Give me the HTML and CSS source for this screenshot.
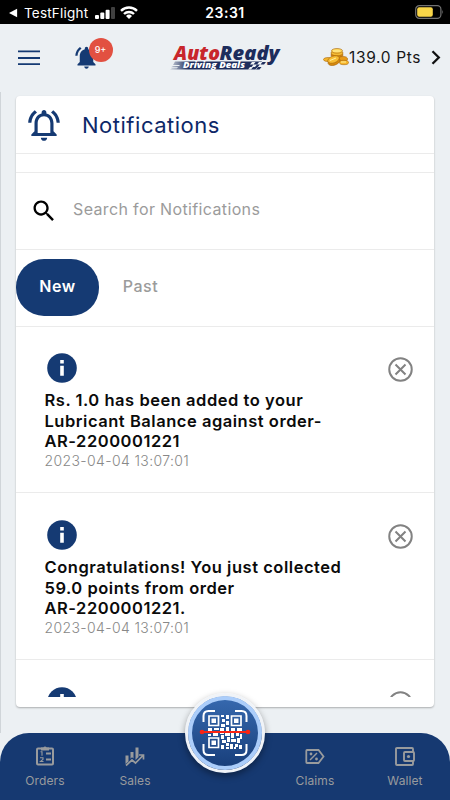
FILE: index.html
```html
<!DOCTYPE html>
<html lang="en">
<head>
<meta charset="utf-8">
<title>Notifications</title>
<link rel="stylesheet" href="styles.css">
</head>
<body>
<svg class="defs" width="0" height="0" aria-hidden="true">
  <symbol id="info" viewBox="0 0 30 30"><circle cx="15" cy="15" r="14.8" fill="#153a73"/><path d="M13.2 7h3.6v3.5h-3.6zM13.2 12.8h3.6v10h-3.6z" fill="#fff"/></symbol>
  <symbol id="close" viewBox="0 0 24 24"><g fill="none" stroke="#828282" stroke-width="1.9"><circle cx="12" cy="12" r="10.8"/><path d="M7.2 7.2l9.6 9.6M16.8 7.2l-9.6 9.6"/></g></symbol>
</svg>
<div class="app">
  <div class="status">
    <svg class="back" viewBox="0 0 10 10"><path d="M0 5L9 .3v9.4z"/></svg>
    <span class="carrier">TestFlight</span>
    <svg class="signal" viewBox="0 0 20 12"><rect y="8" width="4" height="4" rx="1"/><rect x="5.3" y="5.5" width="4" height="6.5" rx="1"/><rect x="10.6" y="2.8" width="4" height="9.2" rx="1"/><rect x="16" width="4" height="12" rx="1" fill="#404040"/></svg>
    <svg class="wifi" viewBox="0 0 18 13"><g fill="none" stroke="#fff" stroke-width="2.4"><path d="M1 4.8a11.4 11.4 0 0 1 16 0M4 8a7.2 7.2 0 0 1 10 0"/></g><path d="M6 10a4.3 4.3 0 0 1 6 0l-3 3z"/></svg>
    <span class="clock">23:31</span>
    <svg class="battery" viewBox="0 0 29 14"><rect x=".7" y=".7" width="25.2" height="12.6" rx="3.6" fill="none" stroke="#727272" stroke-width="1.2"/><rect x="2.2" y="2.2" width="15.6" height="9.6" rx="2" fill="#f8d548"/><path d="M27.3 4.7q1.7 2.3 0 4.6z" fill="#727272"/></svg>
  </div>
  <header class="top">
    <svg class="menu" viewBox="0 0 22 16"><path d="M0 1.3h22M0 8h22M0 14.2h22" stroke="#153a73" stroke-width="1.8"/></svg>
    <div class="alerts">
      <svg viewBox="0 0 24 24"><path fill="#153a73" d="M7.58 4.08L6.15 2.65C3.75 4.48 2.17 7.3 2.03 10.5h2c.15-2.65 1.51-4.97 3.55-6.42zM18 11c0-3.07-1.64-5.64-4.5-6.32V4c0-.83-.67-1.5-1.5-1.5s-1.5.67-1.5 1.5v.68C7.63 5.36 6 7.92 6 11v5l-2 2v1h16v-1l-2-2v-5zm-6 11c1.1 0 2-.9 2-2h-4c0 1.100.9 2 2 2z"/></svg>
      <span class="badge">9+</span>
    </div>
    <svg class="logo" viewBox="0 0 112 28">
      <defs><linearGradient id="strip" x2="1"><stop stop-color="#1d2d5c" stop-opacity=".15"/><stop offset=".2" stop-color="#1d2d5c"/></linearGradient></defs>
      <g class="brand"><text x="4" y="15.500" fill="#c8262b" textLength="46" lengthAdjust="spacingAndGlyphs">Auto</text><text x="49.500" y="15.500" fill="#1d2d5c" textLength="60" lengthAdjust="spacingAndGlyphs">Ready</text></g>
      <path d="M5 17.500h87l-6 8H0l2-1.300h5l1-1H1l2-1.300h6l1-1H3z" fill="url(#strip)"/>
      <text x="13" y="24.200" class="tagline" textLength="62" lengthAdjust="spacingAndGlyphs">Driving Deals</text>
      <path d="M82 18h3.500l-2 2.500H80zM89 18h3.500l-2 2.500H87zM83.500 20.500H87L85 23h-3.500zM80 23h3l-2 2.500h-3zM88 23h3l-2 2.500h-4z" fill="#ecf0f3"/>
      <path d="M90.500 20.500H94l2-2.500h-3.500zM86 25.500h3.500l2-2.500H88z" fill="#1d2d5c"/>
    </svg>
    <div class="points">
      <svg class="coins" viewBox="0 0 26 18"><g stroke="#a86508" stroke-width=".6"><ellipse cx="5" cy="11.500" rx="4.500" ry="2" fill="#f5b52b"/><ellipse cx="14" cy="7" rx="6" ry="3" fill="#d88a12"/><ellipse cx="14" cy="5" rx="6" ry="2.800" fill="#f4bb34"/><ellipse cx="14" cy="2.800" rx="5.500" ry="2.300" fill="#ffd75a"/><ellipse cx="20" cy="11" rx="4.500" ry="2.500" fill="#e79a18"/><ellipse cx="21" cy="14.500" rx="4.500" ry="2.200" fill="#f7b628"/><ellipse cx="11" cy="13.500" rx="6.200" ry="3.600" fill="#d98b0c" transform="rotate(-20 11 13.500)"/><ellipse cx="10.500" cy="11.500" rx="6" ry="3.400" fill="#f7be35" transform="rotate(-20 10.500 11.500)"/></g><path d="M7 12.500l6-2.500M10 3h7M18 14h5" stroke="#fff0a0"/></svg>
      <span>139.0 Pts</span>
      <svg class="chev" viewBox="0 0 10 15"><path d="M1.500 1.200l6.300 6.300-6.300 6.300" fill="none" stroke="#111" stroke-width="2.300"/></svg>
    </div>
  </header>
  <main class="page">
    <section class="card">
      <div class="title">
        <svg viewBox="0 0 24 24"><path fill="#153a73" d="M12 22c1.100 0 2-.9 2-2h-4c0 1.100.9 2 2 2zm6-6v-5c0-3.070-1.630-5.640-4.500-6.320V4c0-.83-.67-1.500-1.500-1.500s-1.500.67-1.500 1.500v.68C7.640 5.360 6 7.920 6 11v5l-2 2v1h16v-1l-2-2zm-2 1H8v-6c0-2.480 1.510-4.500 4-4.500s4 2.020 4 4.500v6zM7.580 4.080L6.150 2.650C3.750 4.480 2.170 7.300 2.030 10.500h2c.15-2.650 1.510-4.970 3.550-6.420zm12.390 6.420h2c-.15-3.200-1.730-6.020-4.120-7.850l-1.420 1.430c2.020 1.450 3.390 3.770 3.540 6.420z"/></svg>
        <h1>Notifications</h1>
      </div>
      <div class="spacer"></div>
      <div class="search">
        <svg viewBox="0 0 24 24"><path d="M15.500 14h-.79l-.28-.27C15.410 12.590 16 11.110 16 9.500 16 5.910 13.090 3 9.500 3S3 5.910 3 9.500 5.910 16 9.500 16c1.610 0 3.090-.59 4.230-1.570l.27.28v.79l5 4.990L20.490 19l-4.990-5zm-6 0C7.010 14 5 11.990 5 9.500S7.010 5 9.500 5 14 7.010 14 9.500 11.990 14 9.500 14z"/></svg>
        <span>Search for Notifications</span>
      </div>
      <div class="tabs"><span class="tab active">New</span><span class="tab">Past</span></div>
      <div class="list">
        <article class="note">
          <div class="icons"><svg class="info"><use href="#info"/></svg><svg class="close"><use href="#close"/></svg></div>
          <p>Rs. 1.0 has been added to your<br>Lubricant Balance against order-<br>AR-2200001221</p>
          <time>2023-04-04 13:07:01</time>
        </article>
        <article class="note">
          <div class="icons"><svg class="info"><use href="#info"/></svg><svg class="close"><use href="#close"/></svg></div>
          <p>Congratulations! You just collected<br>59.0 points from order<br>AR-2200001221.</p>
          <time>2023-04-04 13:07:01</time>
        </article>
        <article class="note">
          <div class="icons"><svg class="info"><use href="#info"/></svg><svg class="close"><use href="#close"/></svg></div>
        </article>
      </div>
    </section>
  </main>
  <nav class="nav">
    <a><svg viewBox="0 0 20 22"><g fill="none" stroke="#999b9d"><rect x="2" y="3.500" width="16" height="16" rx="1" stroke-width="2"/><path d="M11 8.500h5M11 14.500h5" stroke-width="2"/><path d="M5.500 6.800h1.500v4M5 12.800h3v1.500l-2.500 2.200H8.500" stroke-width="1.100"/></g><path d="M6 2.500h2.300a2 2 0 0 1 3.400 0H14v3H6z" fill="#999b9d"/></svg>Orders</a>
    <a><svg viewBox="0 0 20 22"><path d="M.5 10.500H3.500v6L.5 19zM5.500 7h3v6.500L7 12.300l-1.500 1.500zM10.500 2.500h3v9.500l-3 3z" fill="#999b9d"/><path d="M1 20.500l6-5.500 3.500 3 7.500-7.500M14 10h4.500v4.500" fill="none" stroke="#999b9d" stroke-width="1.700"/></svg>Sales</a>
    <a class="scan" aria-label="Scan"></a>
    <a><svg viewBox="0 0 20 22"><path d="M2 5h11.500l5 6.500-5 6.500H2q-.7 0-.7-.7V5.700Q1.300 5 2 5z" fill="none" stroke="#999b9d" stroke-width="1.800"/><path d="M5 15l7-7" stroke="#999b9d" stroke-width="1.500"/><circle cx="6" cy="9" r="1.400" fill="#999b9d"/><circle cx="11.500" cy="14" r="1.400" fill="#999b9d"/></svg>Claims</a>
    <a><svg viewBox="0 0 20 22"><g fill="none" stroke="#999b9d" stroke-width="1.900"><path d="M18 7V4q0-1-1-1H2Q1 3 1 4v15q0 1 1 1h15q1 0 1-1v-3"/><rect x="9" y="7" width="10" height="9" rx="1"/></g><circle cx="13.500" cy="11.500" r="1.600" fill="#999b9d"/></svg>Wallet</a>
    <div class="fab">
      <svg viewBox="0 0 50 46">
        <g fill="none" stroke="#fff" stroke-width="2"><path d="M3.500 12V6q0-5 5-5H15M35 1h6.500q5 0 5 5v6M46.500 34v6q0 5-5 5H35M15 45H8.500q-5 0-5-5v-6"/><path d="M9 6h9.500v9.500H9zM31.500 6H41v9.500h-9.500zM9 28h9.500v9.500H9z" stroke-width="1.700"/></g>
        <path fill="#fff" d="M11.500 8.500h4.500v4.500h-4.500zM34 8.500h4.500v4.500H34zM11.500 30.500h4.500v4.500h-4.500zM21 5h3v2h-3zM26 5h3v4h-3zM22 9h3v3h-3zM26 11h3v4h-3zM21 14h4v3h-4zM8 18h4v4H8zM14 18h5v2h-5zM13 22h5v4h-5zM20 18h4v6h-4zM26 17h3v4h-3zM31 18h4v3h-4zM37 18h5v4h-5zM8 24h3v2H8zM21 25h3v4h-3zM25 23h5v3h-5zM31 23h3v5h-3zM36 23h3v3h-3zM40 24h2v5h-2zM22 30h4v3h-4zM27 27h3v5h-3zM31 29h5v3h-5zM37 28h3v5h-3zM21 35h3v4h-3zM26 33h3v3h-3zM30 34h3v5h-3zM35 34h3v3h-3zM39 35h3v4h-3zM26 37h3v2h-3zM34 37h2v2h-2z"/>
        <path d="M1.500 22h47" stroke="#fa2413" stroke-width="2"/><circle cx="2" cy="22" r="2.300" fill="#fa2413"/><circle cx="48" cy="22" r="2.300" fill="#fa2413"/>
      </svg>
    </div>
  </nav>
</div>
</body>
</html>
```

FILE: styles.css
```css
* { box-sizing: border-box; }
body { margin: 0; font-family: Inter, "Liberation Sans", sans-serif; background: #ecf0f3; }
svg { display: block; flex: none; }
.defs { position: absolute; }
.app { width: 450px; height: 800px; display: flex; flex-direction: column; overflow: hidden; }
.status { height: 24px; flex: none; background: #000; color: #fff; display: flex; align-items: center; padding: 1px 7px 0 9px; position: relative; }
.status svg { fill: #fff; }
.back { width: 9px; height: 10px; }
.carrier { font-size: 13.5px; letter-spacing: .2px; margin-left: 6px; width: 66px; white-space: nowrap; }
.signal { width: 20px; height: 12px; margin-left: 5px; }
.wifi { width: 18px; height: 13px; margin-left: 5px; }
.clock { position: absolute; left: 0; right: 0; text-align: center; font-size: 14px; font-weight: 600; letter-spacing: .5px; }
.status .battery { width: 29px; height: 14px; margin-left: auto; margin-right: -1px; margin-top: -2px; }
.top { height: 68px; flex: none; display: flex; align-items: center; padding: 0 9px 0 18px; }
.menu { width: 22px; height: 16px; margin-top: -1px; }
.alerts { position: relative; width: 27px; height: 27px; margin: -1px 0 0 33px; }
.alerts > svg { width: 27px; height: 27px; }
.badge { position: absolute; left: 15.5px; top: -6px; width: 24px; height: 24px; border-radius: 50%; background: #e25041; color: #fff; font-size: 9px; font-weight: 500; line-height: 24px; text-align: center; }
.logo { width: 112px; height: 28px; margin: -1px 0 0 70px; overflow: visible; }
.brand { font: italic 800 20px "Open Sans", sans-serif; }
.tagline { font: italic 800 8px "Open Sans", sans-serif; fill: #fff; }
.points { display: flex; align-items: center; margin: -2px 0 0 auto; font-size: 15.5px; font-weight: 400; letter-spacing: .65px; color: #171717; white-space: nowrap; }
.points span { width: 72px; }
.coins { width: 26px; height: 18px; }
.chev { width: 10px; height: 15px; margin-left: 10px; }
.page { height: 641px; flex: none; border-left: 1px solid #d0d5d9; padding: 4px 16px 0 15px; }
.card { width: 418px; height: 611px; background: #fff; border-radius: 4px; box-shadow: 0 1px 2px rgba(0,0,0,.28); padding-bottom: 10px; display: flex; flex-direction: column; }
.title { height: 58px; flex: none; border-bottom: 1px solid #ebebeb; display: flex; align-items: center; padding-left: 9px; }
.title svg { width: 38px; height: 38px; margin-top: 0; }
h1 { margin: 0 0 0 19px; font-size: 22px; font-weight: 400; letter-spacing: .52px; color: #0d2868; }
.spacer { height: 19px; flex: none; border-bottom: 1px solid #ebebeb; }
.search { height: 77px; flex: none; border-bottom: 1px solid #ebebeb; display: flex; align-items: center; padding-left: 14px; font-size: 16px; letter-spacing: .36px; color: #9b9b9b; }
.search svg { width: 28px; height: 28px; margin-right: 15px; }
.search span { margin-top: -4px; }
.tabs { height: 77px; flex: none; border-bottom: 1px solid #ebebeb; display: flex; align-items: center; padding-bottom: 2px; }
.tab { width: 83px; height: 57px; border-radius: 28px; display: flex; align-items: center; justify-content: center; font-size: 16px; font-weight: 500; letter-spacing: .5px; color: #9b9b9b; padding-bottom: 3px; }
.tab.active { background: #153a73; color: #fff; font-weight: 600; }
.list { flex: 1; min-height: 0; overflow: hidden; margin-top: -1px; }
.note { height: 167px; border-bottom: 1px solid #ebebeb; padding: 26px 21px 0 28.5px; }
.icons { display: flex; justify-content: space-between; align-items: center; padding-left: 2.5px; height: 32px; }
.info { width: 30px; height: 30px; }
.close { width: 25px; height: 25px; margin-top: 3px; }
p { margin: 6px 0 0; font-size: 16.5px; font-weight: 600; line-height: 20.5px; letter-spacing: .53px; color: #0b0b0b; white-space: nowrap; }
time { display: block; font-size: 14px; line-height: 17px; letter-spacing: .37px; font-weight: 300; color: #888; }
.nav { height: 67px; flex: none; background: #163971; border-radius: 29px 29px 0 0; display: grid; grid-template-columns: repeat(5, 1fr); position: relative; font-size: 12px; color: #999b9d; letter-spacing: .1px; }
.nav a { display: flex; flex-direction: column; align-items: center; padding-top: 12px; gap: 6px; line-height: 16px; }
.nav a svg { width: 20px; height: 22px; }
.fab { position: absolute; left: 185px; top: -40px; width: 80px; height: 80px; border-radius: 50%; border: 3px solid #f0f3f7; background: linear-gradient(#376ab0, #173d79) padding-box; box-shadow: inset 0 0 0 4px #abcdfa, 0 3px 7px rgba(0,0,0,.4); display: grid; place-items: center; }
.fab svg { width: 52px; height: 46px; }
```
